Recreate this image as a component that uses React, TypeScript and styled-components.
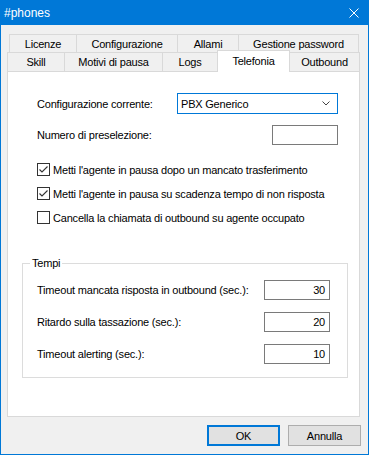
import React from "react";
import styled, { createGlobalStyle } from "styled-components";

const GlobalStyle = createGlobalStyle`
  html, body { margin: 0; padding: 0; background: #f0f0f0; }
  body {
    font-family: "Liberation Sans", Arial, sans-serif;
    font-size: 11px;
    letter-spacing: -0.2px;
    color: #000;
  }
  * { box-sizing: border-box; }
`;

const Window = styled.div`
  width: 369px;
  height: 455px;
  display: flex;
  flex-direction: column;
  background: #f0f0f0;
  overflow: hidden;
`;

const TitleBar = styled.div`
  flex: none;
  height: 25px;
  background: #0078d7;
  color: #fff;
  display: flex;
  align-items: center;
  justify-content: space-between;
  padding: 0 10px 0 4px;
  font-size: 12px;
  letter-spacing: 0;
`;

const CloseIcon = styled.svg`
  width: 10px;
  height: 10px;
  display: block;
`;

const Frame = styled.div`
  flex: 1;
  display: flex;
  flex-direction: column;
  border: 1px solid #0078d7;
  border-top: none;
  padding: 9px 8px 0 6px;
`;

const TabStrip = styled.div`
  display: flex;
  flex-direction: column;
`;

const TabRow = styled.div<{ $h: number; $indent: number }>`
  display: flex;
  align-items: flex-end;
  height: ${(p) => p.$h}px;
  padding-left: ${(p) => p.$indent}px;
`;

const Tab = styled.div<{ $w: number; $active?: boolean }>`
  flex: none;
  width: ${(p) => p.$w}px;
  height: ${(p) => (p.$active ? 22 : 100)}${(p) => (p.$active ? "px" : "%")};
  margin-left: -1px;
  margin-bottom: ${(p) => (p.$active ? -1 : 0)}px;
  border: 1px solid #d9d9d9;
  border-bottom: none;
  background: ${(p) => (p.$active ? "#fff" : "#f0f0f0")};
  z-index: ${(p) => (p.$active ? 2 : 1)};
  display: flex;
  align-items: center;
  justify-content: center;
  padding-bottom: ${(p) => (p.$active ? 1 : 0)}px;
  white-space: nowrap;
  &:first-child { margin-left: 0; }
`;

const Panel = styled.div`
  height: 346px;
  border: 1px solid #d9d9d9;
  background: #fff;
  padding: 21px 11px 0 14px;
  display: flex;
  flex-direction: column;
`;

const TopSection = styled.div`
  padding: 0 10px 0 15px;
  display: flex;
  flex-direction: column;
`;

const FieldRow = styled.div<{ $mt?: number }>`
  display: flex;
  align-items: center;
  justify-content: space-between;
  margin-top: ${(p) => p.$mt ?? 0}px;
`;

const Combo = styled.div`
  width: 161px;
  height: 21px;
  border: 1px solid #0078d7;
  background: #fff;
  display: flex;
  align-items: center;
  justify-content: space-between;
  padding: 0 7px 0 3px;
`;

const TextBox = styled.div<{ $align?: "left" | "right" }>`
  width: 66px;
  height: 20px;
  border: 1px solid #7a7a7a;
  background: #fff;
  display: flex;
  align-items: center;
  justify-content: ${(p) => (p.$align === "right" ? "flex-end" : "flex-start")};
  padding: 0 4px;
`;

const CheckList = styled.div`
  display: flex;
  flex-direction: column;
  gap: 11px;
  margin-top: 18px;
`;

const CheckRow = styled.label`
  display: flex;
  align-items: center;
  height: 13px;
  gap: 3px;
  white-space: nowrap;
`;

const CheckBox = styled.span`
  flex: none;
  width: 13px;
  height: 13px;
  border: 1px solid #333;
  background: #fff;
  display: flex;
  align-items: center;
  justify-content: center;
`;

const GroupBox = styled.fieldset`
  margin: 32px 0 0 0;
  padding: 0;
  border: 1px solid #dcdcdc;
  min-width: 0;
`;

const Legend = styled.legend`
  margin-left: 7px;
  padding: 0 2px;
  line-height: 14px;
`;

const GroupBody = styled.div`
  padding: 10px 17px 13px 14px;
  display: flex;
  flex-direction: column;
  gap: 12px;
`;

const Footer = styled.div`
  display: flex;
  justify-content: flex-end;
  gap: 8px;
  margin: 8px -1px 0 0;
`;

const Button = styled.div<{ $default?: boolean }>`
  width: 73px;
  height: 21px;
  background: #e1e1e1;
  border: ${(p) => (p.$default ? "2px solid #0078d7" : "1px solid #adadad")};
  display: flex;
  align-items: center;
  justify-content: center;
`;

const Check = () => (
  <svg width="11" height="11" viewBox="0 0 11 11">
    <polyline points="1.5,5.5 4,8 9.5,2.5" fill="none" stroke="#333" strokeWidth="1.1" />
  </svg>
);

const row1 = [
  { label: "Licenze", w: 68 },
  { label: "Configurazione", w: 102 },
  { label: "Allami", w: 62 },
  { label: "Gestione password", w: 121 },
];
const row2 = [
  { label: "Skill", w: 58 },
  { label: "Motivi di pausa", w: 99 },
  { label: "Logs", w: 56 },
  { label: "Telefonia", w: 73, active: true },
  { label: "Outbound", w: 71 },
];

const checks = [
  { label: "Metti l'agente in pausa dopo un mancato trasferimento", on: true },
  { label: "Metti l'agente in pausa su scadenza tempo di non risposta", on: true },
  { label: "Cancella la chiamata di outbound su agente occupato", on: false },
];

const times = [
  { label: "Timeout mancata risposta in outbound (sec.):", v: "30" },
  { label: "Ritardo sulla tassazione (sec.):", v: "20" },
  { label: "Timeout alerting (sec.):", v: "10" },
];

export default function App() {
  return (
    <>
      <GlobalStyle />
      <Window>
        <TitleBar>
          <span>#phones</span>
          <CloseIcon viewBox="0 0 10 10">
            <path d="M0.5 0.5 L9.5 9.5 M9.5 0.5 L0.5 9.5" stroke="#fff" strokeWidth="1" fill="none" />
          </CloseIcon>
        </TitleBar>
        <Frame>
          <TabStrip>
            <TabRow $h={18} $indent={2}>
              {row1.map((t) => (
                <Tab key={t.label} $w={t.w}>{t.label}</Tab>
              ))}
            </TabRow>
            <TabRow $h={19} $indent={0}>
              {row2.map((t) => (
                <Tab key={t.label} $w={t.w} $active={t.active}>{t.label}</Tab>
              ))}
            </TabRow>
          </TabStrip>
          <Panel>
            <TopSection>
              <FieldRow>
                <span>Configurazione corrente:</span>
                <Combo>
                  <span>PBX Generico</span>
                  <svg width="8" height="5" viewBox="0 0 8 5">
                    <polyline points="0.5,0.5 4,4 7.5,0.5" fill="none" stroke="#444" strokeWidth="1" />
                  </svg>
                </Combo>
              </FieldRow>
              <FieldRow $mt={11}>
                <span>Numero di preselezione:</span>
                <TextBox />
              </FieldRow>
              <CheckList>
                {checks.map((c) => (
                  <CheckRow key={c.label}>
                    <CheckBox>{c.on && <Check />}</CheckBox>
                    <span>{c.label}</span>
                  </CheckRow>
                ))}
              </CheckList>
            </TopSection>
            <GroupBox>
              <Legend>Tempi</Legend>
              <GroupBody>
                {times.map((t) => (
                  <FieldRow key={t.label}>
                    <span>{t.label}</span>
                    <TextBox $align="right">{t.v}</TextBox>
                  </FieldRow>
                ))}
              </GroupBody>
            </GroupBox>
          </Panel>
          <Footer>
            <Button $default>OK</Button>
            <Button>Annulla</Button>
          </Footer>
        </Frame>
      </Window>
    </>
  );
}
